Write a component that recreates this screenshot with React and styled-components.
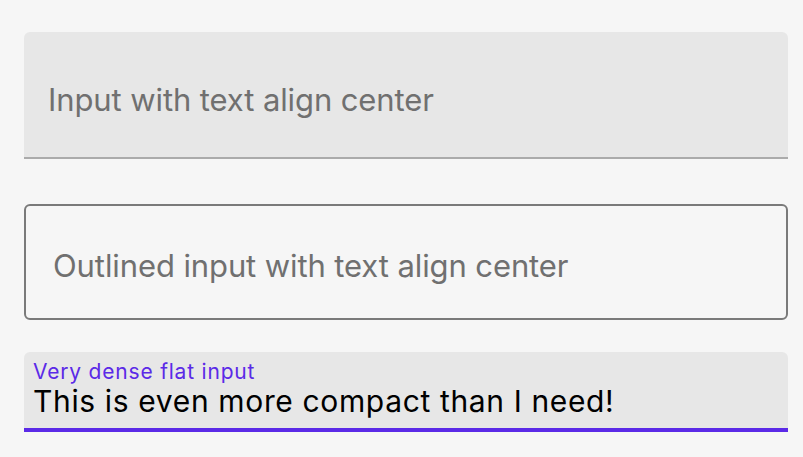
import styled, { createGlobalStyle } from 'styled-components';

const GlobalStyle = createGlobalStyle`
  html, body {
    margin: 0;
    background: #f6f6f6;
  }
  body {
    font-family: Inter, "Noto Sans", sans-serif;
  }
`;

const colors = {
  page: '#f6f6f6',
  fill: '#e7e7e7',
  underline: '#ababab',
  outline: '#7a7a7a',
  placeholder: '#707070',
  primary: '#5b2ae7',
  text: '#000000',
};

const Page = styled.main`
  width: 803px;
  height: 457px;
  box-sizing: border-box;
  padding: 32px 15px 0 24px;
  display: flex;
  flex-direction: column;
  background: ${colors.page};
`;

const FlatField = styled.div`
  height: 127px;
  box-sizing: border-box;
  background: ${colors.fill};
  border-radius: 6px 6px 0 0;
  border-bottom: 2px solid ${colors.underline};
  display: flex;
  align-items: center;
  padding: 10px 24px 0;
`;

const OutlinedField = styled.div`
  margin-top: 45px;
  height: 116px;
  box-sizing: border-box;
  border: 2px solid ${colors.outline};
  border-radius: 6px;
  display: flex;
  align-items: center;
  padding: 6px 27px 0;
`;

const Placeholder = styled.span`
  font-size: 31px;
  color: ${colors.placeholder};
  letter-spacing: -0.1px;
  white-space: nowrap;
`;

const DenseField = styled.div`
  margin-top: 32px;
  height: 80px;
  box-sizing: border-box;
  background: ${colors.fill};
  border-radius: 6px 6px 0 0;
  border-bottom: 4px solid ${colors.primary};
  display: flex;
  flex-direction: column;
  padding: 7px 9px 0;
`;

const Label = styled.span`
  font-size: 21px;
  line-height: 25px;
  letter-spacing: 0.8px;
  color: ${colors.primary};
  white-space: nowrap;
`;

const Value = styled.span`
  font-size: 30px;
  line-height: 34px;
  letter-spacing: 0.64px;
  color: ${colors.text};
  white-space: nowrap;
`;

const App = () => (
  <>
    <GlobalStyle />
    <Page>
      <FlatField>
        <Placeholder>Input with text align center</Placeholder>
      </FlatField>
      <OutlinedField>
        <Placeholder>Outlined input with text align center</Placeholder>
      </OutlinedField>
      <DenseField>
        <Label>Very dense flat input</Label>
        <Value>This is even more compact than I need!</Value>
      </DenseField>
    </Page>
  </>
);

export default App;
